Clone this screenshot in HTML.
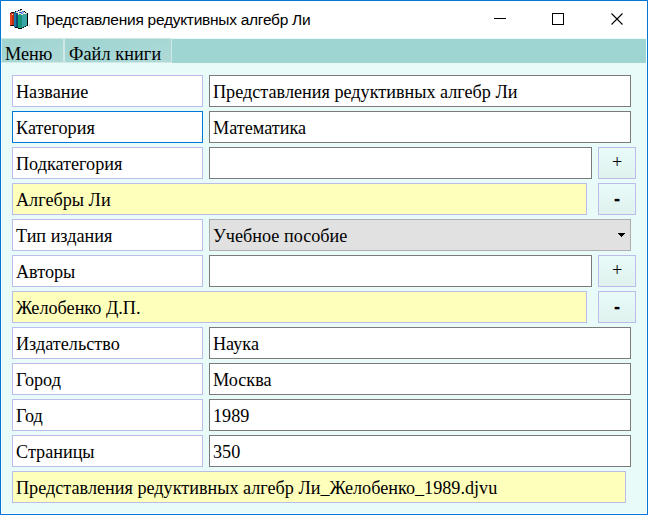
<!DOCTYPE html>
<html lang="ru">
<head>
<meta charset="utf-8">
<title>Представления редуктивных алгебр Ли</title>
<style>
html,body{margin:0;padding:0;}
body{width:648px;height:515px;overflow:hidden;background:#fff;position:relative;font-family:"Liberation Serif",serif;font-size:18.18px;color:#000;}
#win{position:absolute;left:0;top:0;width:646px;height:513px;border:1px solid #0078d7;background:#fff;}
#title{position:absolute;left:1px;top:1px;width:646px;height:37px;background:#fff;}
#ttext{position:absolute;left:34.5px;top:8.5px;height:20px;line-height:20px;font-family:"Liberation Sans",sans-serif;font-size:15.5px;letter-spacing:-0.27px;white-space:nowrap;}
#menu{position:absolute;left:2px;top:39px;width:644px;height:24px;background:#9ed4d1;}
.mi{position:absolute;top:38px;height:23px;line-height:25px;white-space:nowrap;border:1px solid #d0e9e6;background:linear-gradient(160deg,#a0d4d1 0%,#a6d7d4 55%,#afd9d7 100%);}
#client{position:absolute;left:2px;top:38px;width:644px;height:475px;background:#e8fbf9;}
.box{position:absolute;height:30px;line-height:30px;border:1px solid #bbbbec;background:#fff;white-space:nowrap;overflow:hidden;box-sizing:content-box;}
.lab{left:12px;width:189px;padding-left:3px;width:186px;}
.inp{left:209px;border-color:#7a7a7a;padding-left:3px;width:417px;}
.inp.nar{width:378px;}
.yel{left:12px;background:#ffffbc;padding-left:3px;width:570px;}
.btn{left:598px;width:36px;text-align:center;background:linear-gradient(#e8fbf9,#e0f2ee);}
.sel{left:209px;width:417px;padding-left:3px;background:#e1e1e1;border-color:#adadad;}
.t{position:relative;top:1px;}
</style>
</head>
<body>
<div id="win"></div>
<div id="title">
<svg style="position:absolute;left:7px;top:7px" width="24" height="24" viewBox="8 8 24 24" shape-rendering="crispEdges">
<polygon points="15,12 18,11 20,10 22,10 24,11 27,13 27,14 22,16 18,15 15,13" fill="#f3efcf"/>
<rect x="10" y="13" width="2" height="12" fill="#e8401e"/>
<rect x="12" y="13" width="2" height="12" fill="#b83010"/>
<rect x="12" y="14" width="1" height="1" fill="#fff0e8"/>
<rect x="10" y="13" width="1" height="1" fill="#300"/>
<rect x="11" y="12" width="1" height="1" fill="#622"/>
<rect x="12" y="12" width="2" height="1" fill="#000"/>
<rect x="10" y="25" width="1" height="1" fill="#633"/>
<rect x="11" y="25" width="3" height="1" fill="#000"/>
<rect x="14" y="12" width="2" height="15" fill="#1b78ae"/>
<rect x="16" y="13" width="2" height="14" fill="#0b4c74"/>
<rect x="14" y="12" width="1" height="1" fill="#3a8ab8"/>
<rect x="15" y="11" width="1" height="1" fill="#000"/>
<rect x="14" y="27" width="1" height="1" fill="#9cc8dc"/>
<rect x="15" y="27" width="2" height="1" fill="#000"/>
<rect x="17" y="27" width="1" height="1" fill="#123"/>
<rect x="18" y="15" width="2" height="13" fill="#10a072"/>
<rect x="20" y="15" width="2" height="13" fill="#1a8f80"/>
<rect x="18" y="28" width="4" height="1" fill="#000"/>
<polygon points="22,15 27,13 27,25 22,28" fill="#3aa3a5"/>
<rect x="22" y="27" width="1" height="1" fill="#186"/>
<rect x="23" y="27" width="1" height="1" fill="#000"/>
<rect x="24" y="26" width="1" height="1" fill="#277"/>
<rect x="25" y="26" width="1" height="1" fill="#000"/>
<rect x="26" y="25" width="1" height="1" fill="#277"/>
<rect x="27" y="13" width="1" height="13" fill="#000"/>
<rect x="29" y="24" width="1" height="3" fill="#e0e0e0"/>
<rect x="17" y="11" width="1" height="1" fill="#3a6ae0"/>
<rect x="16" y="11" width="1" height="1" fill="#8aa8e8"/>
<rect x="18" y="10" width="1" height="1" fill="#000"/>
<rect x="19" y="10" width="1" height="1" fill="#6a8ae8"/>
<rect x="20" y="9" width="2" height="1" fill="#000"/>
<rect x="20" y="10" width="1" height="1" fill="#2a5ad8"/>
<rect x="22" y="11" width="2" height="1" fill="#4a74e0"/>
<rect x="19" y="12" width="3" height="1" fill="#2a5ad8"/>
<rect x="21" y="13" width="2" height="1" fill="#4a74e0"/>
<rect x="23" y="12" width="1" height="1" fill="#6a8ae8"/>
<rect x="24" y="11" width="1" height="1" fill="#000"/>
<rect x="25" y="12" width="1" height="1" fill="#000"/>
<rect x="18" y="14" width="1" height="1" fill="#c8e0f0"/>
<rect x="19" y="14" width="2" height="1" fill="#2a9a8a"/>
<rect x="26" y="13" width="1" height="1" fill="#7cc"/>
</svg>
<div id="ttext">Представления редуктивных алгебр Ли</div>
<svg style="position:absolute;left:0;top:0" width="646" height="37" viewBox="1 1 646 37" shape-rendering="crispEdges">
<rect x="494" y="18" width="12" height="1" fill="#000"/>
<rect x="552.5" y="13.5" width="11" height="11" fill="none" stroke="#000" stroke-width="1"/>
</svg>
<svg style="position:absolute;left:0;top:0" width="646" height="37" viewBox="1 1 646 37">
<path d="M611.5 13.5 L622.5 24.5 M622.5 13.5 L611.5 24.5" stroke="#000" stroke-width="1.1" fill="none"/>
</svg>
</div>
<div id="client"></div>
<div id="menu"></div>
<div class="mi" style="left:1px;width:61px;"><span style="position:absolute;left:3px;top:3px">Меню</span></div>
<div class="mi" style="left:64px;width:106px;"><span style="position:absolute;left:4px;top:3px;letter-spacing:0.1px">Файл книги</span></div>

<div class="box lab" style="top:75px"><span class="t">Название</span></div>
<div class="box inp" style="top:75px"><span class="t">Представления редуктивных алгебр Ли</span></div>

<div class="box lab" style="top:111px;border-color:#0078d7"><span class="t">Категория</span></div>
<div class="box inp" style="top:111px"><span class="t">Математика</span></div>

<div class="box lab" style="top:147px"><span class="t">Подкатегория</span></div>
<div class="box inp nar" style="top:147px"></div>
<div class="box btn" style="top:147px"><span class="t" style="top:-1px">+</span></div>

<div class="box yel" style="top:183px"><span class="t">Алгебры Ли</span></div>
<div class="box btn" style="top:183px"><span class="t" style="top:0;text-shadow:0 -1px 0 #000">-</span></div>

<div class="box lab" style="top:219px"><span class="t">Тип издания</span></div>
<div class="box sel" style="top:219px"><span class="t">Учебное пособие</span>
<svg style="position:absolute;left:408px;top:13px" width="7" height="4" viewBox="0 0 7 4" shape-rendering="crispEdges"><rect x="0" y="0" width="7" height="1"/><rect x="1" y="1" width="5" height="1"/><rect x="2" y="2" width="3" height="1"/><rect x="3" y="3" width="1" height="1"/></svg>
</div>

<div class="box lab" style="top:255px"><span class="t">Авторы</span></div>
<div class="box inp nar" style="top:255px"></div>
<div class="box btn" style="top:255px"><span class="t" style="top:-1px">+</span></div>

<div class="box yel" style="top:291px"><span class="t">Желобенко Д.П.</span></div>
<div class="box btn" style="top:291px"><span class="t" style="top:0;text-shadow:0 -1px 0 #000">-</span></div>

<div class="box lab" style="top:327px"><span class="t">Издательство</span></div>
<div class="box inp" style="top:327px"><span class="t">Наука</span></div>

<div class="box lab" style="top:363px"><span class="t">Город</span></div>
<div class="box inp" style="top:363px"><span class="t">Москва</span></div>

<div class="box lab" style="top:399px"><span class="t">Год</span></div>
<div class="box inp" style="top:399px"><span class="t">1989</span></div>

<div class="box lab" style="top:435px"><span class="t">Страницы</span></div>
<div class="box inp" style="top:435px"><span class="t">350</span></div>

<div class="box yel" style="top:471px;width:609px"><span class="t">Представления редуктивных алгебр Ли_Желобенко_1989.djvu</span></div>
</body>
</html>
